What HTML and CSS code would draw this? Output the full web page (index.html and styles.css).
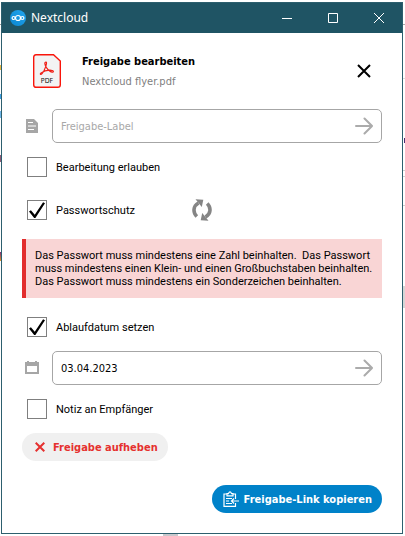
FILE: index.html
```html
<!DOCTYPE html>
<html lang="de">
<head>
<meta charset="utf-8">
<title>Nextcloud</title>
<link rel="stylesheet" href="styles.css">
</head>
<body>
<div class="window">
  <header class="titlebar">
    <svg class="app-logo" viewBox="0 0 16 16" aria-hidden="true">
      <defs><linearGradient id="logo" x1="0" y1="1" x2="1" y2="0"><stop offset="0" stop-color="#0b86d0"/><stop offset="1" stop-color="#22a6ef"/></linearGradient></defs>
      <circle cx="8" cy="8" r="8" fill="url(#logo)"/>
      <g fill="none" stroke="#fff" stroke-width="1.2"><circle cx="8" cy="8" r="2.5"/><circle cx="3.6" cy="8" r="1.5"/><circle cx="12.4" cy="8" r="1.5"/></g>
    </svg>
    <span class="app-name">Nextcloud</span>
    <button class="caption" type="button" aria-label="Minimieren"><svg viewBox="0 0 10 10"><path d="M0 5.5h10"/></svg></button>
    <button class="caption" type="button" aria-label="Maximieren"><svg viewBox="0 0 10 10"><path d="M.5.5h9v9h-9z"/></svg></button>
    <button class="caption" type="button" aria-label="Fenster schließen"><svg viewBox="0 0 10 10"><path d="M0 0l10 10M10 0L0 10"/></svg></button>
  </header>
  <main class="content">
    <div class="file-header">
      <svg class="pdf" viewBox="0 0 28 34" aria-hidden="true">
        <path d="M3 .7h17.500l6.800 6.300v23.700q0 2.600-2.600 2.600H3.300Q.7 33.300.7 30.700V3.300Q.7.700 3 .7z" fill="#f3f3f3" stroke="#f9150b" stroke-width="1.400"/>
        <path d="M13 8c-1.800 0-1.300 3 .2 5.200 1.500 2.400 3.800 4.600 5.800 5 2 .3 1.800-1.700-.4-1.900-3.300-.4-8.200.9-10.500 2.600-1.600 1.300-.4 2.200 1 .7C11.200 17.500 14.800 8.200 13 8z" fill="none" stroke="#f02018" stroke-width="1.200"/>
        <text x="14" y="29" text-anchor="middle" class="pdf-text">PDF</text>
      </svg>
      <div class="file-names">
        <h1 class="heading">Freigabe bearbeiten</h1>
        <p class="filename">Nextcloud flyer.pdf</p>
      </div>
      <button class="close" type="button" aria-label="Schließen"><svg viewBox="0 0 14 14"><path d="M1 1l12 12M13 1L1 13"/></svg></button>
    </div>

    <div class="field-row">
      <svg class="field-icon" viewBox="0 0 14 14" aria-hidden="true"><path d="M1 0h8l4 4v10H1z" fill="#a6a6a6"/><path d="M3 3.500h5M3 7h8M3 10.500h6" stroke="#fff"/></svg>
      <div class="field">
        <input class="input" type="text" aria-label="Freigabe-Label" placeholder="Freigabe-Label">
        <button class="submit" type="button" aria-label="Label übernehmen"><svg viewBox="0 0 18 18"><path d="M1 9h16M9.500 1.500L17 9l-7.500 7.500"/></svg></button>
      </div>
    </div>

    <div class="option"><input class="check" type="checkbox" id="edit"><label for="edit">Bearbeitung erlauben</label></div>

    <div class="option password">
      <input class="check" type="checkbox" id="password" checked><label class="password-label" for="password">Passwortschutz</label>
      <svg class="sync" viewBox="0 0 20 22" role="img" aria-label="Wird geladen"><g fill="none" stroke="#858585" stroke-width="3.600"><path d="M4.800 17.500C.8 13.500.9 7 6.500 4"/><path d="M15.200 4.500c4 4 3.900 10.500-1.700 13.500"/></g><path d="M3.500 .3l7.800.5-1.500 7.200zM16.500 21.700l-7.800-.5 1.500-7.200z" fill="#858585"/></svg>
    </div>

    <p class="error" role="alert">Das Passwort muss mindestens eine Zahl beinhalten.&nbsp; Das Passwort<br>muss mindestens einen Klein- und einen Großbuchstaben beinhalten.<br>Das Passwort muss mindestens ein Sonderzeichen beinhalten.</p>

    <div class="option"><input class="check" type="checkbox" id="expire" checked><label for="expire">Ablaufdatum setzen</label></div>

    <div class="field-row">
      <svg class="field-icon" viewBox="0 0 14 14" aria-hidden="true"><path d="M1 2h12v10H1z" fill="none" stroke="#a6a6a6" stroke-width="2"/><path d="M0 2h14v3H0zM2 0h2v3H2zM10 0h2v3h-2z" fill="#a6a6a6"/></svg>
      <div class="field">
        <input class="input" type="text" aria-label="Ablaufdatum" value="03.04.2023">
        <button class="submit" type="button" aria-label="Datum übernehmen"><svg viewBox="0 0 18 18"><path d="M1 9h16M9.500 1.500L17 9l-7.500 7.500"/></svg></button>
      </div>
    </div>

    <div class="option"><input class="check" type="checkbox" id="note"><label for="note">Notiz an Empfänger</label></div>

    <button class="pill unshare" type="button"><svg class="cross" viewBox="0 0 10 10" aria-hidden="true"><path d="M.7.700l8.600 8.600M9.300.700L.7 9.300"/></svg>Freigabe aufheben</button>

    <button class="pill copy" type="button"><svg class="clip" viewBox="0 0 16 16" aria-hidden="true"><path d="M4 3H1v12.300h11.500V12M12.500 8V3H10M4 4.800V2.600h1.500Q7-.8 8.500 2.600H10v2.200zM3 7.500h6M3 10h3M3 12.500h6M16 10H8.500M11 7.500L8.500 10l2.500 2.500"/></svg>Freigabe-Link kopieren</button>
  </main>
</div>
</body>
</html>
```
FILE: styles.css
```css
* { box-sizing: border-box; }
body {
  margin: 0;
  padding: 2px 2px 2px 1px;
  min-height: 100vh;
  color: #000;
  font: 11px/13px "DejaVu Sans Condensed", "DejaVu Sans", sans-serif;
  /* slivers of the desktop behind the window */
  background:
    linear-gradient(#a8a8a8, #a8a8a8) 100% 24px / 2px 1px no-repeat,
    linear-gradient(#dcdcdc, #dcdcdc) 100% 78px / 2px 1px no-repeat,
    linear-gradient(#4b2c70, #4b2c70) 100% 138px / 1px 5px no-repeat,
    linear-gradient(#d0d0d0, #d0d0d0) 100% 170px / 2px 1px no-repeat,
    linear-gradient(#d0d0d0, #d0d0d0) 100% 176px / 2px 1px no-repeat,
    linear-gradient(#d0d0d0, #d0d0d0) 100% 205px / 2px 1px no-repeat,
    linear-gradient(#d6d6d6, #d6d6d6) 100% 286px / 2px 22px no-repeat,
    linear-gradient(#999, #999) 0 24px / 1px 1px no-repeat,
    linear-gradient(#e5b847, #e5b847) 0 65px / 1px 5px no-repeat,
    linear-gradient(#3f9ee0, #3f9ee0) 0 94px / 1px 5px no-repeat,
    linear-gradient(#6fb6e8, #6fb6e8) 0 111px / 1px 7px no-repeat,
    linear-gradient(#8d5c77, #8d5c77) 0 155px / 1px 7px no-repeat,
    linear-gradient(#7c2c7a, #df9b2c) 0 252px / 1px 9px no-repeat,
    linear-gradient(#c8c8cc, #c8c8cc) 163px 100% / 15px 2px no-repeat,
    #fff;
}
button { padding: 0; border: 0; background: none; font: inherit; }
svg { display: block; flex: none; }
h1, p { margin: 0; }

.window { border: 1px solid #2d5f6e; background: #fff; }
.titlebar {
  display: flex;
  align-items: center;
  height: 30px;
  padding-left: 8px;
  background: #1f5464;
  color: #fff;
  font: 12px/16px "Noto Sans", sans-serif;
}
.app-logo { width: 16px; height: 16px; margin-right: 5px; }
.app-name { flex: 1; }
.caption { display: grid; place-items: center; width: 46px; height: 30px; }
.caption svg { width: 10px; height: 10px; fill: none; stroke: #fff; }

.content { display: flex; flex-direction: column; padding: 21px 20px 20px; }
.file-header { display: flex; align-items: center; height: 34px; margin: 0 11px 21px 11px; }
.pdf { width: 28px; height: 34px; }
.pdf-text { font: 7px "DejaVu Sans Condensed", sans-serif; fill: #111; }
.file-names { flex: 1; margin-left: 21px; padding-top: 2px; }
.heading, .filename { font-size: 11px; line-height: 20px; }
.filename { color: #808080; }
.close svg { width: 14px; height: 14px; fill: none; stroke: #000; stroke-width: 2; }

.field-row { display: flex; align-items: center; gap: 13px; padding-left: 3px; margin-bottom: 14px; }
.field-icon { width: 14px; height: 14px; }
.field {
  flex: 1;
  display: flex;
  align-items: center;
  height: 34px;
  padding: 0 8px;
  border: 1px solid #a6a6a6;
  border-radius: 5px;
}
.input { flex: 1; min-width: 0; padding: 0; border: 0; outline: 0; background: none; color: #000; font: inherit; }
.input::placeholder { color: #a8a8a8; }
.submit svg { width: 18px; height: 18px; fill: none; stroke: #ababab; stroke-width: 2; stroke-linecap: round; }

.option { display: flex; align-items: center; gap: 9px; padding-left: 5px; height: 20px; margin-bottom: 14px; }
.option, .error { font-family: Roboto, sans-serif; }
.check { appearance: none; display: grid; width: 20px; height: 20px; margin: 0; border: 1px solid #7f7f7f; background: #fff; }
.check:checked::before {
  content: "";
  width: 16px;
  height: 16px;
  margin: 1px;
  background: #000;
  clip-path: polygon(0 60%, 12% 52%, 36% 80%, 88% 2%, 100% 8%, 40% 100%, 32% 100%);
}
.password { margin: 9px 0 19px; }
.password-label { width: 127px; }
.sync { width: 20px; height: 22px; }

.error { margin-bottom: 19px; padding: 10px 9px; border-left: 4px solid #e22d2d; background: #f9d5d5; }

.pill { display: flex; align-items: center; height: 28px; border-radius: 14px; font-weight: bold; }
.unshare { align-self: flex-start; gap: 8px; padding: 0 10px 0 13px; background: #f0f0f0; color: #e5302f; }
.cross { width: 10px; height: 10px; fill: none; stroke: #e5302f; stroke-width: 2; }
.copy { align-self: flex-end; gap: 5px; margin-top: 24px; padding: 0 10px 0 11px; background: #0082c9; color: #fff; }
.clip { width: 16px; height: 16px; fill: none; stroke: #fff; stroke-width: 1.200; }
```
